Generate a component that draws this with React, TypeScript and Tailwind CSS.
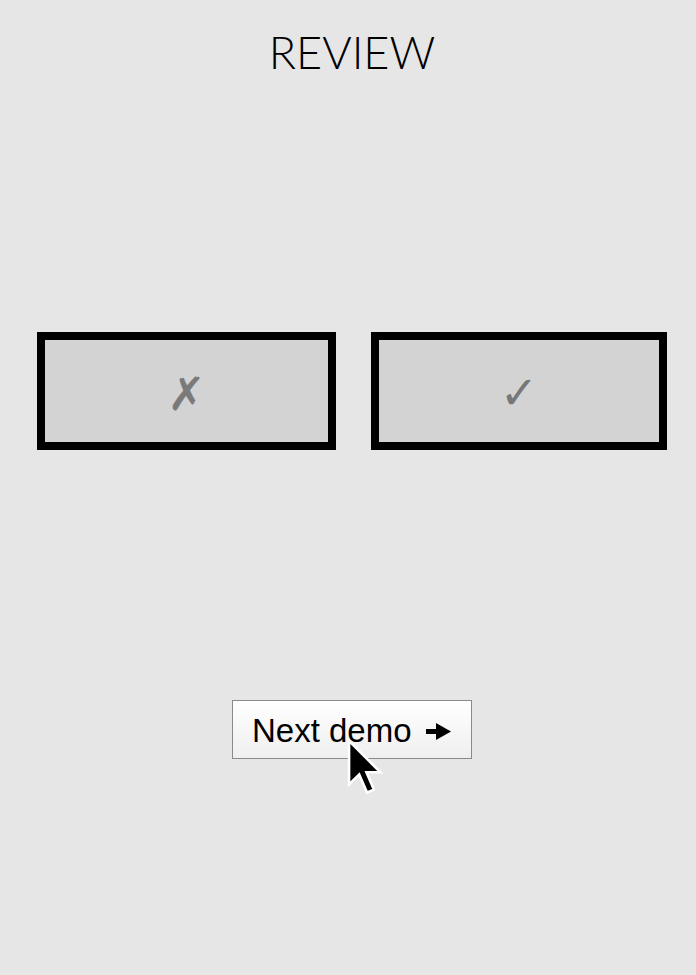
import React from 'react';

const Cursor = () => (
  <svg
    className="absolute left-[346px] top-[738px]"
    width="38"
    height="58"
    viewBox="0 0 13 20"
  >
    <path
      d="M1 1 L1 16 L4.5 12.6 L7.2 18.8 L9.6 17.8 L7 11.8 L11.8 11.8 Z"
      fill="#000"
      stroke="#fff"
      strokeWidth="0.9"
      strokeLinejoin="miter"
    />
  </svg>
);

const Arrow = () => (
  <svg width="26" height="18" viewBox="0 0 26 18" className="mt-[1px]">
    <rect x="0" y="6" width="11" height="5" fill="#000" />
    <path d="M10 0 L25 8.5 L10 17 Z" fill="#000" />
  </svg>
);

const App = () => {
  return (
    <div className="relative min-h-[975px] bg-[#e6e6e6] pl-[8px]">
      {/* Title */}
      <h1 className="pt-[24px] text-center text-[45px] leading-[56px] font-light text-black [font-family:Lato,'Noto_Sans',sans-serif]">
        REVIEW
      </h1>

      {/* Choices */}
      <div className="mt-[252px] flex gap-[35px] px-[29px]">
        <button className="flex h-[118px] w-[299px] items-center justify-center border-[8px] border-black bg-[#d3d3d3] pt-[6px] text-[46px] text-[#7a7a7a] [font-family:'DejaVu_Sans',sans-serif]">
          ✗
        </button>
        <button className="flex h-[118px] w-[296px] items-center justify-center border-[8px] border-black bg-[#d3d3d3] pt-[4px] text-[46px] text-[#777] [font-family:'DejaVu_Sans',sans-serif]">
          ✓
        </button>
      </div>

      {/* Next */}
      <div className="mt-[250px] flex justify-center">
        <button className="flex h-[59px] w-[240px] items-center gap-[14px] border border-[#8a8a8a] bg-gradient-to-b from-white to-[#efefef] pl-[19px] pt-[3px] text-[33px] text-black [font-family:'Liberation_Sans',Arial,sans-serif]">
          <span>Next demo</span>
          <Arrow />
        </button>
      </div>

      <Cursor />
    </div>
  );
};

export default App;
